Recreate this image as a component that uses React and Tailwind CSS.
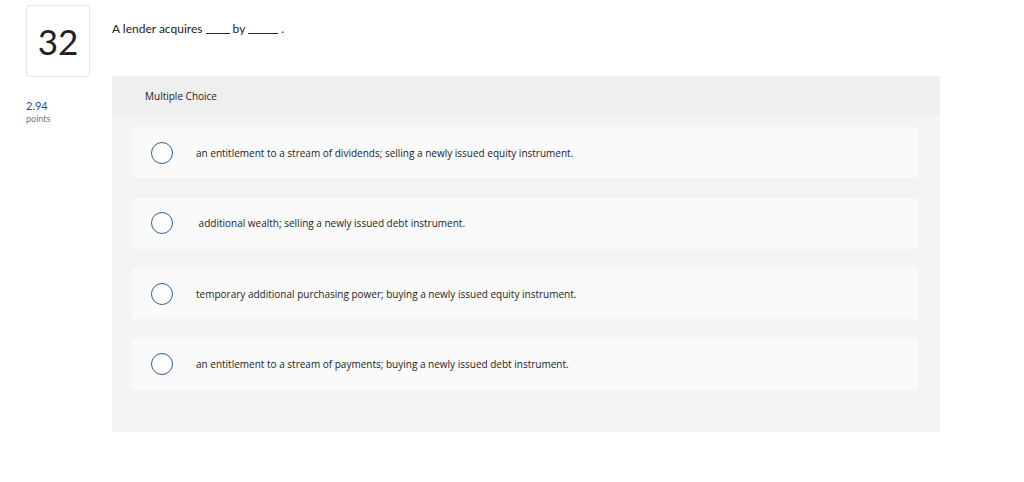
const options = [
  'an entitlement to a stream of dividends; selling a newly issued equity instrument.',
  '\u00a0additional wealth; selling a newly issued debt instrument.',
  'temporary additional purchasing power; buying a newly issued equity instrument.',
  'an entitlement to a stream of payments; buying a newly issued debt instrument.',
];

const openSans = { fontFamily: '"Open Sans", Lato, sans-serif' };

function Radio() {
  return (
    <span className="block w-[22px] h-[22px] rounded-full border border-[#2d5c9a] bg-white shrink-0" />
  );
}

export default function App() {
  return (
    <div
      className="w-[1024px] h-[482px] bg-white flex text-[#333]"
      style={{ fontFamily: 'Lato, "Open Sans", sans-serif' }}
    >
      <div className="w-[112px] shrink-0 pl-[26px] pt-[5px]">
        <div className="w-[64px] h-[72px] border border-[#e6e6e6] rounded-[4px] flex items-center justify-center text-[35px] font-normal text-[#222]">
          32
        </div>
        <div className="mt-[22px] text-[11px] leading-[13px] text-[#1d4f8f]">2.94</div>
        <div className="mt-[1px] text-[9px] leading-[11px] text-[#777]">points</div>
      </div>

      <div className="w-[828px] shrink-0">
        <div className="pt-[21px] h-[76px] text-[12px] leading-[16px] text-[#222]">
          A lender acquires <span className="inline-block w-[24px] border-b border-[#222] translate-y-[1px]" /> by{' '}
          <span className="inline-block w-[30px] border-b border-[#222] translate-y-[1px]" /> .
        </div>

        <div className="bg-[#f4f4f4] h-[356px]">
          <div
            className="h-[39px] bg-[#efefef] pl-[33px] pt-[1px] flex items-center text-[10px] text-[#222]"
            style={openSans}
          >
            Multiple Choice
          </div>
          <div className="pl-[20px] pr-[22px] pt-[12px] flex flex-col gap-[19.5px]">
            {options.map((o, i) => (
              <div
                key={i}
                className="h-[51px] bg-[#fafafa] rounded-[2px] flex items-center pl-[19px] gap-[23px] text-[10px] text-[#222]"
                style={openSans}
              >
                <Radio />
                <span className="pt-[1px]">{o}</span>
              </div>
            ))}
          </div>
        </div>
      </div>
    </div>
  );
}
